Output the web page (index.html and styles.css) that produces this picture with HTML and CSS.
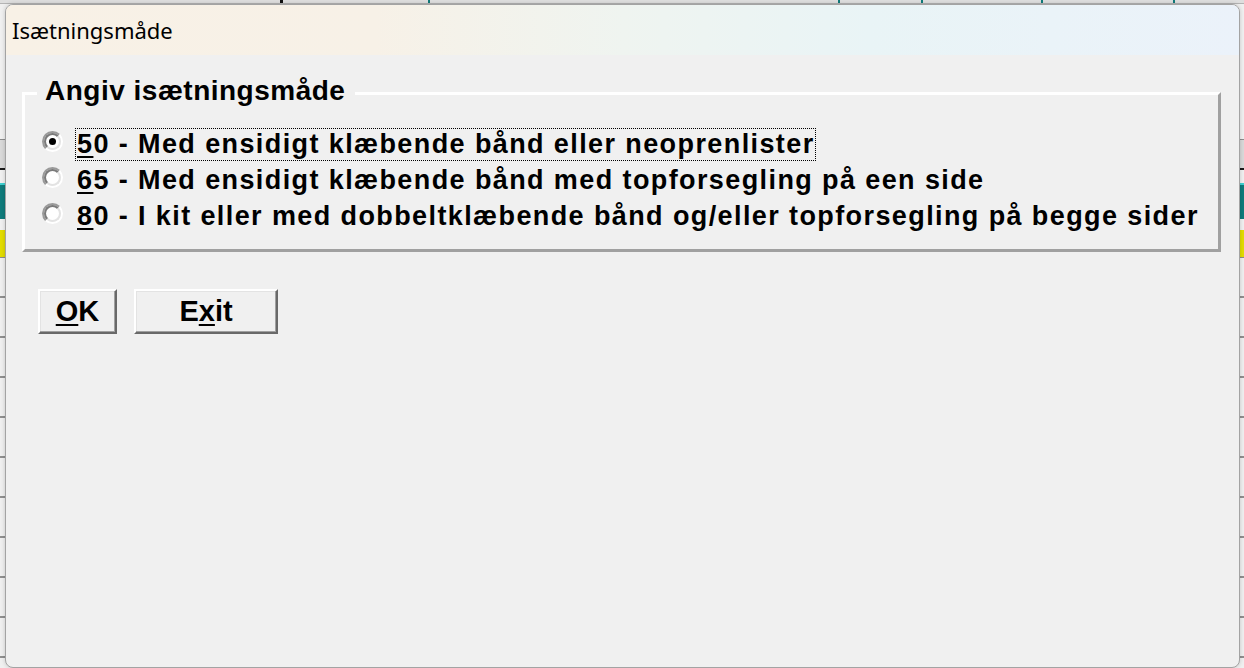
FILE: index.html
```html
<!DOCTYPE html>
<html lang="da">
<head>
<meta charset="utf-8">
<title>Isætningsmåde</title>
<link rel="stylesheet" href="styles.css">
</head>
<body>
<div class="app">
  <div class="app-top">
    <span class="cell c1"></span>
    <span class="cell c2"></span>
    <span class="cell c3"></span>
    <span class="cell c4"></span>
    <span class="cell c5"></span>
    <span class="cell c6"></span>
    <span class="cell c7"></span>
  </div>
  <div class="row ra"></div>
  <div class="row rb"></div>
  <div class="row rc"></div>
  <div class="row rd"></div>
  <div class="row re"></div>
  <div class="row rf"></div>
  <div class="row rg"></div>
  <div class="row rg"></div>
  <div class="row rg"></div>
  <div class="row rg"></div>
  <div class="row rg"></div>
  <div class="row rg"></div>
  <div class="row rg"></div>
  <div class="row rg"></div>
  <div class="row rg"></div>
  <div class="row rg"></div>
</div>

<div class="dialog">
  <div class="titlebar">Isætningsmåde</div>
  <div class="client">
    <div class="group">
      <span class="legend">Angiv isætningsmåde</span>
      <div class="opts">
        <div class="opt">
          <span class="radio"><span class="ring"><span class="dot"></span></span></span>
          <span class="lbl focus"><u>5</u>0 - Med ensidigt klæbende bånd eller neoprenlister</span>
        </div>
        <div class="opt">
          <span class="radio"><span class="ring"></span></span>
          <span class="lbl"><u>6</u>5 - Med ensidigt klæbende bånd med topforsegling på een side</span>
        </div>
        <div class="opt">
          <span class="radio"><span class="ring"></span></span>
          <span class="lbl"><u>8</u>0 - I kit eller med dobbeltklæbende bånd og/eller topforsegling på begge sider</span>
        </div>
      </div>
    </div>
    <div class="buttons">
      <button class="btn btn-ok"><u>O</u>K</button>
      <button class="btn btn-exit">E<u>x</u>it</button>
    </div>
  </div>
</div>
</body>
</html>
```

FILE: styles.css
```css
* { box-sizing: border-box; }

html, body {
  margin: 0;
  padding: 0;
}

body {
  width: 1244px;
  height: 668px;
  overflow: hidden;
  position: relative;
  background: #f0f0f0;
  font-family: "Liberation Sans", Arial, sans-serif;
}

/* ---------- background application (mostly hidden) ---------- */
.app {
  width: 1244px;
  height: 668px;
  display: flex;
  flex-direction: column;
  overflow: hidden;
}

.app-top {
  height: 4px;
  flex: none;
  display: flex;
  background: #dedede;
  border-bottom: 1px solid #b4b4b4;
}

.cell {
  height: 100%;
  border-right: 2px solid #0f7a7a;
}
.c1 { width: 283px; border-right: 3px solid #111; }
.c2 { width: 147px; }
.c3 { width: 410px; }
.c4 { width: 83px; }
.c5 { width: 120px; }
.c6 { width: 132px; }
.c7 { flex: 1; border-right: none; }

.row { flex: none; width: 100%; }
.ra { height: 136px; background: #f0f0f0; border-bottom: 1px solid #8c8c8c; }
.rb { height: 30px; background: #d9d9d9; border-bottom: 2px solid #1c1c1c; }
.rc { height: 13px; background: #f0f0f0; }
.rd { height: 36px; background: #0f7b7b; border-top: 2px solid #3fd0d0; }
.re { height: 11px; background: #f0f0f0; }
.rf { height: 28px; background: #e2dc00; border-bottom: 1px solid #8c8c8c; }
.rg { height: 40px; background: #efefef; border-bottom: 2px solid #8f8f8f; }

/* ---------- dialog window ---------- */
.dialog {
  position: absolute;
  left: 5px;
  top: 4px;
  width: 1235px;
  height: 664px;
  border: 1px solid #a3a3a3;
  border-radius: 8px;
  background: #f0f0f0;
  overflow: hidden;
  box-shadow: 0 0 4px rgba(0, 0, 0, 0.18);
}

.titlebar {
  height: 50px;
  padding-left: 6px;
  line-height: 50px;
  font-family: "Noto Sans", "Open Sans", sans-serif;
  font-size: 22px;
  color: #000;
  background: linear-gradient(90deg,
    #f8f1e6 0%,
    #f7f1e7 30%,
    #eff4f0 50%,
    #e9f4f6 70%,
    #ebf2fa 100%);
}

.client {
  padding: 37px 0 0 16px;
}

/* ---------- group box ---------- */
.group {
  position: relative;
  width: 1199px;
  height: 160px;
  border: 3px solid;
  border-color: #ffffff #a0a0a0 #a0a0a0 #ffffff;
}

.legend {
  position: absolute;
  top: -20px;
  left: 12px;
  padding: 0 10px 0 8px;
  background: #f0f0f0;
  font-weight: bold;
  font-size: 28px;
  line-height: 32px;
  letter-spacing: 0.5px;
  color: #000;
  white-space: nowrap;
}

.opts {
  padding-top: 32px;
  display: flex;
  flex-direction: column;
}

.opt {
  height: 36px;
  display: flex;
  align-items: flex-start;
}

.radio {
  width: 21px;
  height: 21px;
  margin: 4px 12px 0 17px;
  border-radius: 50%;
  border: 2px solid;
  border-color: #9a9a9a #ffffff #ffffff #9a9a9a;
  display: flex;
  flex: none;
}

.ring {
  flex: 1;
  border-radius: 50%;
  border: 2px solid;
  border-color: #7a7a7a #e3e3e3 #e3e3e3 #7a7a7a;
  background: #ffffff;
  display: flex;
  align-items: center;
  justify-content: center;
}

.dot {
  width: 7px;
  height: 7px;
  border-radius: 50%;
  background: #000;
}

.lbl {
  margin-top: 1px;
  height: 33px;
  padding-left: 1px;
  border: 1px dotted transparent;
  font-weight: bold;
  font-size: 27px;
  line-height: 31px;
  letter-spacing: 1.4px;
  color: #000;
  white-space: nowrap;
}

.lbl.focus { border-color: #000; }

u {
  text-decoration: underline;
  text-decoration-thickness: 2px;
  text-underline-offset: 3px;
}

/* ---------- buttons ---------- */
.buttons {
  margin-top: 37px;
  padding-left: 16px;
  display: flex;
  gap: 17px;
}

.btn {
  height: 45px;
  padding: 0;
  border: 2px solid;
  border-color: #ffffff #696969 #696969 #ffffff;
  box-shadow: inset -1px -1px 0 #a0a0a0, inset 1px 1px 0 #e3e3e3;
  background: #f0f0f0;
  font-family: "Liberation Sans", Arial, sans-serif;
  font-weight: bold;
  font-size: 29px;
  line-height: 41px;
  color: #000;
  text-align: center;
}

.btn-ok { width: 79px; }
.btn-exit { width: 144px; }
```
